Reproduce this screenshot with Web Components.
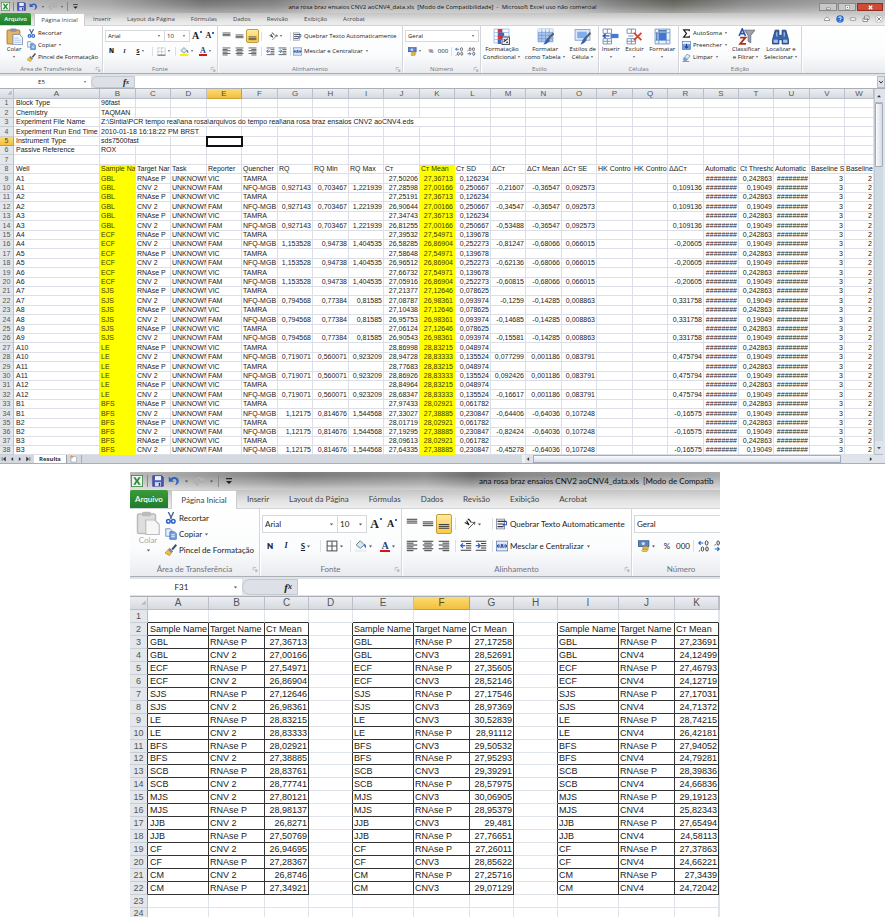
<!DOCTYPE html>
<html lang="pt-BR">
<head>
<meta charset="utf-8">
<title>ana rosa braz ensaios CNV2 aoCNV4_data.xls</title>
<style>
html,body{margin:0;background:#fff}
body{height:100vh;display:flex;flex-direction:column;gap:8px;overflow:hidden;font-family:"Liberation Sans",Arial,sans-serif;color:#222}
.second{flex:1;min-height:0;width:67%;max-width:590px;margin-left:130px}
</style>
</head>
<body>
<xl-window>
  <xl-titlebar controls>ana rosa braz ensaios CNV2 aoCNV4_data.xls &nbsp;[Modo de Compatibilidade] &nbsp;- &nbsp;Microsoft Excel uso não comercial</xl-titlebar>
  <xl-tabs controls></xl-tabs>
  <xl-ribbon full></xl-ribbon>
  <xl-formula cell="E5" expander></xl-formula>
  <xl-sheet kind="results"></xl-sheet>
  <xl-sheetbar name="Results"></xl-sheetbar>
</xl-window>
<xl-window class="second" size="large">
  <xl-titlebar>ana rosa braz ensaios CNV2 aoCNV4_data.xls &nbsp;[Modo de Compatib</xl-titlebar>
  <xl-tabs></xl-tabs>
  <xl-ribbon></xl-ribbon>
  <xl-formula cell="F31"></xl-formula>
  <xl-sheet kind="summary"></xl-sheet>
</xl-window>

<script>
const define=(name,render,after)=>customElements.define(name,class extends HTMLElement{
  connectedCallback(){
    if(this.shadowRoot)return;
    const root=this.attachShadow({mode:'open'});
    root.innerHTML=render(this);
    if(after)after(root,this);
  }
});
const lines=(list,c='#444')=>list.map(([x,y,w])=>`<rect x="${x}" y="${y}" width="${w}" height="1.4" fill="${c}"/>`).join('');
const ICONS={
  excel:'<rect x=".5" y=".5" width="15" height="15" fill="#eef6ec" stroke="#2f7d36"/><path d="M3 3h3l2 3.3L10 3h3L9.600 8l3.400 5h-3L8 9.700 6 13H3l3.400-5z" fill="#2c8a3a"/>',
  save:'<path d="M1 1h12l2 2v12H1z" fill="#4b59b8" stroke="#2d3787"/><rect x="4" y="1.500" width="8" height="5.500" fill="#eef1fb"/><rect x="4" y="9.500" width="8" height="5.500" fill="#d5daf0"/><rect x="9" y="10.500" width="2" height="4" fill="#2d3787"/>',
  undo:'<path d="M1 2v7h7L5.600 6.600C9 4 12.500 6 11 10.500c-.5 1.500-1.500 2.800-2.500 3.500C14 13 16 8 13 4.700 10.500 2 6.600 2 3.500 4.500z" fill="#2f5fc0"/>',
  redo:'<path d="M15 2v7H8l2.400-2.400C7 4 3.500 6 5 10.500c.5 1.500 1.500 2.800 2.500 3.500C2 13 0 8 3 4.700 5.500 2 9.400 2 12.500 4.500z" fill="#b4b6ba" stroke="#999" stroke-width=".5"/>',
  qat:'<path d="M4 4h8v1.500H4zM4 8h8l-4 4z" fill="#222"/>',
  caret:'<path d="M3 5h10l-5 6z" fill="#555"/>',
  cut:'<path d="M4.500 0l4.300 9M11.500 0L7.200 9" stroke="#41608f" stroke-width="1.800" fill="none"/><circle cx="4.500" cy="12.300" r="2.400" fill="none" stroke="#2a62c4" stroke-width="2"/><circle cx="11" cy="12.300" r="2.400" fill="none" stroke="#2a62c4" stroke-width="2"/>',
  copy:'<path d="M1 1h6l2 2v8H1z" fill="#e6effb" stroke="#5379b8"/><path d="M6.500 5h6l2.500 2.500V15H6.500z" fill="#7da7e6" stroke="#2f5fae"/><path d="M8.500 9h4.500M8.500 11.500h4.500" stroke="#fff"/>',
  brush:'<path d="M15 1l-5.500 6.500" stroke="#444d60" stroke-width="2.600"/><path d="M6 5l5 5-2.500 2L4 7.500z" fill="#7e8798"/><path d="M4 7.500l4.500 4.500L6 15.500 0 12z" fill="#f0c04a" stroke="#a87a1c" stroke-width=".8"/>',
  paste:'<rect x="1" y="2" width="12" height="13" rx="1" fill="#e3b565" stroke="#b38433"/><rect x="4" y=".5" width="6" height="3" rx="1" fill="#8b93a3"/><path d="M6.500 6h6l3 3v6.800h-9z" fill="#f3f7fd" stroke="#6c86b5" stroke-width=".8"/><path d="M8 9.500h4M8 11.500h6M8 13.500h6" stroke="#9db4da" stroke-width=".7"/>',
  pastegray:'<rect x="1" y="2" width="12" height="13" rx="1" fill="#dedede" stroke="#bbb"/><rect x="4" y=".5" width="6" height="3" rx="1" fill="#bbb"/><path d="M6.500 6h6l3 3v6.800h-9z" fill="#f6f6f6" stroke="#bdbdbd" stroke-width=".8"/>',
  border:'<rect x="1.500" y="1.500" width="13" height="13" fill="none" stroke="#555" stroke-width="1.400" /><path d="M8 1.500v13M1.500 8h13" stroke="#555" stroke-width="1.400"/>',
  borderlow:'<path d="M1.500 1.500h13v13M1.500 1.500v13M8 1.500v13M1.500 8h13" fill="none" stroke="#8d93a0" stroke-dasharray="1.500 1"/><path d="M1 14.500h14" stroke="#444" stroke-width="1.600"/>',
  bucket:'<path d="M7 1L1.500 6.500 7 11l5.500-4.500z" fill="#d9e6f7" stroke="#466" /><path d="M12 5c2 .5 3.500 3 2.500 6-1-.5-2-2.500-2.500-4z" fill="#3d6bc0"/><rect x="0" y="12.500" width="15" height="3.500" fill="var(--paint,#ffee00)"/>',
  top:lines([[1,1,14],[1,3.500,14],[1,6,14]]),
  mid:lines([[1,4.500,14],[1,7,14],[1,9.500,14]]),
  bot:lines([[1,8,14],[1,10.500,14],[1,13,14]]),
  left:lines([[1,1,14],[1,3.500,9],[1,6,14],[1,8.500,9],[1,11,14],[1,13.500,9]]),
  center:lines([[1,1,14],[3,3.500,10],[1,6,14],[3,8.500,10],[1,11,14],[3,13.500,10]]),
  right:lines([[1,1,14],[6,3.500,9],[1,6,14],[6,8.500,9],[1,11,14],[6,13.500,9]]),
  orient:'<path d="M6 14L14.500 5.500M14.500 5.500l-3.500.5M14.500 5.500l-.5 3.500" stroke="#555" stroke-width="1.300" fill="none"/><path d="M1 6l6 3M3.500 3.500l3 6M5 1.500c3 0 3 3 5 4.500" stroke="#222" stroke-width="1.500" fill="none"/>',
  outdent:lines([[1,1,14],[8,4,7],[8,7,7],[8,10,7],[1,13,14]])+'<path d="M7 7.500H2M4 4.500L1 7.500l3 3" stroke="#2a62c4" stroke-width="1.700" fill="none"/>',
  indent:lines([[1,1,14],[8,4,7],[8,7,7],[8,10,7],[1,13,14]])+'<path d="M1 7.500h5M4 4.500l3 3-3 3" stroke="#2a62c4" stroke-width="1.700" fill="none"/>',
  wrap:'<rect x=".5" y="1.500" width="11" height="13" fill="#f4f6fa" stroke="#778"/><path d="M2 4.500h12M2 8h8M2 11.500h8" stroke="#334" stroke-width="1.400"/><path d="M14 4.500v4.500h-4M11.500 7L9.500 9l2 2" stroke="#2a62c4" stroke-width="1.400" fill="none"/>',
  merge:'<rect x=".5" y="1.500" width="15" height="13" fill="#e9eef8" stroke="#5d78ad"/><rect x="1" y="5" width="14" height="6" fill="#a9c4ee"/><path d="M5 8H1.500M11 8h3.500M3.500 6L1.500 8l2 2M12.500 6l2 2-2 2M8 5.500L6.500 10.500M8 5.500l1.500 5" stroke="#223f7d" stroke-width="1.200" fill="none"/>',
  money:'<rect x=".5" y="1" width="14" height="7.500" fill="#5d83c9" stroke="#2e4e8e"/><circle cx="7" cy="4.700" r="2.200" fill="#cfdef5"/><ellipse cx="10" cy="10" rx="4" ry="1.600" fill="#f4ce58" stroke="#9a7415" stroke-width=".7"/><ellipse cx="10" cy="12" rx="4" ry="1.600" fill="#f4ce58" stroke="#9a7415" stroke-width=".7"/><ellipse cx="9" cy="14" rx="4" ry="1.600" fill="#f4ce58" stroke="#9a7415" stroke-width=".7"/>',
  incdec:'<path d="M7 4H1M3.500 1.500L1 4l2.500 2.500" stroke="#2a62c4" stroke-width="1.500" fill="none"/><ellipse cx="11.500" cy="4" rx="1.900" ry="2.800" fill="none" stroke="#333" stroke-width="1.200"/><ellipse cx="6" cy="12" rx="1.700" ry="2.800" fill="none" stroke="#333" stroke-width="1.200"/><ellipse cx="12" cy="12" rx="1.700" ry="2.800" fill="none" stroke="#333" stroke-width="1.200"/><path d="M2.500 13.500l-1 2" stroke="#333"/>',
  decdec:'<ellipse cx="5.500" cy="4" rx="1.700" ry="2.800" fill="none" stroke="#333" stroke-width="1.200"/><ellipse cx="11.500" cy="4" rx="1.700" ry="2.800" fill="none" stroke="#333" stroke-width="1.200"/><path d="M2 5.500l-1 2" stroke="#333"/><path d="M1 12h6M4.500 9.500L7 12l-2.500 2.500" stroke="#2a62c4" stroke-width="1.500" fill="none"/><ellipse cx="12" cy="12" rx="1.900" ry="2.800" fill="none" stroke="#333" stroke-width="1.200"/>',
  cond:'<path d="M1 1h14v13H1zM1 4.300h14M1 7.600h14M1 10.900h14M5 1v13M9 1v13" fill="#fff" stroke="#8fb0dd" stroke-width=".7"/><rect x="4.500" y="1" width="4" height="3.500" fill="#d8323a"/><rect x="4.500" y="7.500" width="5" height="3.500" fill="#d8323a"/><rect x="4.500" y="4.500" width="6" height="3" fill="#3a66c4"/><rect x="4.500" y="11" width="3" height="4" fill="#3a66c4"/><rect x="8.500" y="8.500" width="7" height="7" fill="#eef2f8" stroke="#556"/><path d="M10 13l4-3M10 11h1.500M12.500 13.500H14" stroke="#223" stroke-width="1"/>',
  table:'<path d="M1 1h14v12H1z" fill="#a9c6ef" stroke="#6f92c8" stroke-width=".7"/><rect x="1" y="1" width="14" height="3" fill="#eef3fb"/><path d="M1 4h14M1 7h14M1 10h14M4.500 1v12M8 1v12M11.500 1v12" stroke="#6f92c8" stroke-width=".6"/><path d="M15.500 5l-6 6.500" stroke="#5a5f6b" stroke-width="2"/><path d="M10.500 9.500l1.500 2c-1.500 3-4 4-6 4 1.500-1.500 1.500-4 4.500-6z" fill="#3263b5"/>',
  styles:'<rect x="1" y="1.500" width="14" height="10" fill="#dfe9f7" stroke="#7d9bce" stroke-width=".8"/><rect x="3" y="3.500" width="9" height="6" fill="#80adee"/><path d="M15.500 4.500l-6 6.500" stroke="#5a5f6b" stroke-width="2"/><path d="M10.500 9l1.500 2c-1.500 3-4 4-6 4.500 1.500-1.500 1.500-4.500 4.500-6.500z" fill="#3263b5"/>',
  insert:'<path d="M1 1h8v4H1zM1 10h8v5H1zM5 1v4M5 10v5M1 12.500h8" fill="#fff" stroke="#7890b8" stroke-width=".9"/><rect x="8" y="5.500" width="7.500" height="4" fill="#4779ce"/><path d="M7 7.500H1M3.500 5.500l-2.500 2 2.500 2" stroke="#2a55a8" stroke-width="1.200" fill="none"/>',
  del:'<path d="M1 1h8v4H1zM1 10h8v5H1zM5 1v4M5 10v5M1 12.500h8M2 7.500h5" fill="#fff" stroke="#7890b8" stroke-width=".9"/><path d="M7.500 4.500l7 7M14.500 4.500l-7 7" stroke="#d4402e" stroke-width="1.600"/>',
  format:'<path d="M1 1h14v14H1zM1 4.500h14M1 11.500h14M4.500 1v14M11.500 1v14" fill="#eaf1fb" stroke="#7f9ccb" stroke-width=".9"/><rect x="4.500" y="4.500" width="7" height="7" fill="#3f78d3"/><path d="M4.500 2.700h7M2.700 4.500v7" stroke="#24509c" stroke-width="1"/>',
  sigma:'<path d="M13 4V1.500H3L8 8l-5 6.500h10V12" fill="none" stroke="#222" stroke-width="2.200"/>',
  fill:'<rect x="1" y="1" width="14" height="14" fill="#6f9be0" stroke="#3560a8"/><rect x="1.500" y="1.500" width="13" height="4" fill="#e8effa"/><path d="M8 5v7M5 9.500l3 3 3-3" stroke="#1c3f88" stroke-width="1.800" fill="none"/>',
  erase:'<path d="M2 10.500L9 2l5.500 3L8 13.500H3.500z" fill="#dfe8f5" stroke="#5b6d90"/><path d="M2 10.500l3-3.500 5 3.500-2 3H3.500z" fill="#7aa1dc"/><path d="M1 15h12" stroke="#445" stroke-width="1"/>',
  sort:'<path d="M1 7.500L4 .8l3 6.700M2 5.300h4" stroke="#2a55a8" stroke-width="1.500" fill="none"/><path d="M2 9h5l-5 6h5.500" stroke="#a8321e" stroke-width="1.700" fill="none"/><path d="M6 2h10l-4 5v7l-2.500-1.500V7z" fill="#9aa1ad" stroke="#5d6470" stroke-width=".7"/>',
  find:'<path d="M3 2h3.500v4.500l1 .5h1l1-.5V2H13l2.500 9v4H9.500v-4h-3v4H.5v-4z" fill="#3a66ad" stroke="#1d3c74" stroke-width=".8"/><rect x="1.500" y="11" width="4" height="3" fill="#9fc0ee"/><rect x="10.500" y="11" width="4" height="3" fill="#9fc0ee"/><path d="M4.500 4v4M11.500 4v4" stroke="#a9c8f2"/>',
  launcher:'<path d="M3 12V4h8" stroke="#999" stroke-width="1.400" fill="none"/><path d="M7 8l6 6M13 9v5H8" stroke="#888" stroke-width="1.500" fill="none"/>',
  help:'<circle cx="8" cy="8" r="7.500" fill="#2f6fc9"/><path d="M5.500 6c0-3.500 5-3.500 5 0 0 2-2.500 2-2.500 4M8 11.500v2" stroke="#fff" stroke-width="1.800" fill="none"/>',
  up:'<path d="M3 11V8l5-4 5 4v3z" fill="#fff" stroke="#777" stroke-width="1.400"/>',
  wmin:'<rect x="2.500" y="5.500" width="11" height="5" rx="1" fill="#fff" stroke="#777" stroke-width="1.400"/>',
  wrest:'<path d="M5 2h9v7H5zM2 6h9v7H2z" fill="#fff" stroke="#777" stroke-width="1.500"/>',
  wclose:'<path d="M2 2h12v12H2z" fill="#fff" stroke="#999"/><path d="M4.500 4.500l7 7M11.500 4.500l-7 7" stroke="#777" stroke-width="1.800"/>',
  cmin:'<rect x="4" y="9" width="8" height="3" fill="#fff" stroke="#555"/>',
  cmax:'<rect x="3" y="3" width="10" height="10" fill="#fff" stroke="#555"/><rect x="6.500" y="6.500" width="3" height="3" fill="#777"/>',
  cclose:'<path d="M4 4l8 8M12 4l-8 8" stroke="#fff" stroke-width="3"/>',
  newtab:'<path d="M2 3h9l2 2v9H2z" fill="#fff" stroke="#7d8aa5"/><path d="M1 1l5 5M3.500 0v7M0 3.500h7" stroke="#eb9a2b" stroke-width="1.500"/>',
  first:'<path d="M3 3v10M12 3L6 8l6 5z" stroke="#333" fill="#333" stroke-width="1.500"/>',
  prev:'<path d="M11 3L5 8l6 5z" fill="#333"/>',
  next:'<path d="M5 3l6 5-6 5z" fill="#333"/>',
  last:'<path d="M13 3v10M4 3l6 5-6 5z" stroke="#333" fill="#333" stroke-width="1.500"/>',
  arrowup:'<path d="M3 11l5-6 5 6z" fill="#333"/>',
  corner:'<path d="M13 3v10H3z" fill="#b4b9c4"/>',
  chevron:'<path d="M3 5l5 6 5-6" fill="none" stroke="#222" stroke-width="2.400"/>'
};
define('xl-icon',e=>`<style>:host{display:inline-block;flex:none;width:var(--ic,9px);height:var(--ic,9px)}svg{display:block;width:100%;height:100%}</style>
<svg viewBox="0 0 16 16" aria-hidden="true">${ICONS[e.getAttribute('name')]}</svg>`);
const icon=(n,cls='')=>`<xl-icon name="${n}" class="${cls}"></xl-icon>`;
const caret=icon('caret','caret');
const RESET=`*{box-sizing:border-box}button,select,input{font:inherit;color:inherit;background:none;border:0;padding:0;margin:0;border-radius:0;appearance:none;min-width:0;white-space:nowrap}.caret{--ic:var(--caret)}`;

define('xl-window',()=>`<style>
::slotted(*){flex:none}
:host{display:flex;flex-direction:column;overflow:hidden;flex:none;--fs:6px;--ui:"Open Sans","Noto Sans",sans-serif;--title-fs:6px;--title-h:13px;--tabs-h:13px;--arq-w:31px;--tab-on:51px;--tab-pad:8px;--ic:9px;--caret:4px;--big:17px;
--body-h:38px;--label-h:9px;--row:14px;--row-top:3px;--row-gap:1px;--small-row:12px;--line:8px;--fx-h:12px;--fx-bottom:0;--name-w:91px;--gut:3px;
--g1:103px;--g2:115px;--g3:185px;--g4:78px;--paste-w:26px;--font-top:60px 25px 14px 12px;--font-bot:13px 13px 19px 4px 19px 4px 19px 19px;--al:13px 13px 13px 5px 24px 5px auto;--num:20px 12px 12px 4px 12px 12px}
:host([size=large]){--fs:8px;--ui:Lato,"Open Sans",sans-serif;--title-fs:8px;--title-h:18px;--tabs-h:19px;--arq-w:38px;--tab-on:66px;--tab-pad:10px;--ic:12px;--caret:5px;--big:24px;
--body-h:53px;--label-h:14px;--row:20px;--row-top:5px;--row-gap:2px;--small-row:16px;--line:10px;--fx-h:16px;--fx-bottom:1px;--name-w:112px;--gut:4px;
--g1:130px;--g2:142px;--g3:230px;--g4:99px;--paste-w:34px;--font-top:76px 29px 18px 14px;--font-bot:16px 16px 24px 4px 26px 4px 24px 24px;--al:16px 16px 16px 6px 30px 8px auto;--num:25px 16px 16px 5px 16px 16px}
</style><slot></slot>`);

define('xl-titlebar',e=>`<style>${RESET}
:host{display:grid;grid-template-columns:1fr auto 1fr;align-items:center;height:var(--title-h);font:var(--title-fs)/var(--line) var(--ui);color:#111;white-space:nowrap;background:linear-gradient(#0000,#fff2 45%,#fff6),linear-gradient(90deg,#b9b9b9,#a2a2a2 12%,#6f6f6f 23%,#7d7d7d 31%,#adadad 38%,#b0b0b0 62%,#777 70%,#5f6058 76%,#858585 84%,#a8a8a8)}
.q{display:flex;align-items:center;gap:var(--gut);padding-left:1px}.q button{display:flex;align-items:center}
.c{display:flex;justify-content:flex-end;gap:1px;padding-right:2px}
.c button{width:18px;height:8px;display:grid;place-items:center;background:#c8c8c8;border:1px solid #888;--ic:7px}.c .x{width:26px;background:#d04a35;border-color:#8e3024}
i{width:1px;height:var(--ic);background:#888}
:host(:not([controls])){grid-template-columns:349px auto;background:linear-gradient(#0000 20%,#fff4 60%,#fff9),linear-gradient(90deg,#bbb,#999 14%,#7c7c7c 28%,#8e8e8e 50%,#6f6f6f 58%,#8a8a8a 66%,#aaa)}
</style><div class="q">${icon('excel')}<i></i><button aria-label="Salvar">${icon('save')}</button><button aria-label="Desfazer">${icon('undo')}</button>${caret}<button aria-label="Refazer">${icon('redo')}</button>${caret}<i></i><button aria-label="Personalizar">${icon('qat')}</button></div>
<span><slot></slot></span>${e.hasAttribute('controls')?`<div class="c"><button aria-label="Minimizar">${icon('cmin')}</button><button aria-label="Restaurar">${icon('cmax')}</button><button class="x" aria-label="Fechar">${icon('cclose')}</button></div>`:''}`);

define('xl-tabs',e=>`<style>${RESET}
:host{display:flex;align-items:stretch;box-sizing:border-box;height:var(--tabs-h);font:var(--fs)/var(--line) var(--ui);color:#444;background:linear-gradient(#c3c3c3,#e3e3e3 60%,#eee);border-bottom:1px solid #d0d3d8}
button{padding:0 var(--tab-pad)}
.a{width:var(--arq-w);padding:0;color:#fff;background:linear-gradient(#3c9a3c,#1e7d2a);border-radius:2px 2px 0 0;font-weight:600}
.on{width:var(--tab-on);padding:0;margin:0 0 -1px 3px;background:#fff;border:1px solid #ccc;border-bottom:0;border-radius:2px 2px 0 0}
.r{margin-left:auto;display:flex;align-items:center;gap:5px;padding-right:2px;--ic:8px}.r button{padding:0;display:flex}
</style><button class="a">Arquivo</button><button class="on">Página Inicial</button>${['Inserir','Layout da Página','Fórmulas','Dados','Revisão','Exibição','Acrobat'].map(t=>`<button>${t}</button>`).join('')}
${e.hasAttribute('controls')?`<div class="r">${[['up','Minimizar faixa'],['help','Ajuda'],['wmin','Minimizar pasta'],['wrest','Restaurar pasta'],['wclose','Fechar pasta']].map(([n,l])=>`<button aria-label="${l}">${icon(n)}</button>`).join('')}</div>`:''}`);

define('xl-group',e=>`<style>${RESET}
:host{display:flex;flex-direction:column;flex:none;box-sizing:border-box;border-right:1px solid #d3d6db;box-shadow:1px 0 #fff}
.b{height:var(--body-h)}
.l{position:relative;display:flex;justify-content:center;align-items:center;height:var(--label-h);color:#6f747d;line-height:var(--line);white-space:nowrap}
.l button{position:absolute;right:1px;--ic:6px;display:flex}
</style><div class="b"><slot></slot></div><div class="l"><span>${e.getAttribute('label')}</span>${e.hasAttribute('launcher')?`<button aria-label="Mais opções">${icon('launcher')}</button>`:''}</div>`);

const small=(ic,t,c)=>`<button class="sm">${icon(ic)}<span>${t}</span>${c?caret:''}</button>`;
const big=(ic,a,b,c=true)=>`<button class="big">${icon(ic)}<span>${a}</span><span class="n">${b}${c?caret:''}</span></button>`;
const ib=(ic,l,c,cls='')=>`<button class="ib ${cls}" aria-label="${l}">${icon(ic)}${c?caret:''}</button>`;
const tb=(t,l,c,cls='')=>`<button class="ib ${cls}" aria-label="${l}"><span>${t}</span>${c?caret:''}</button>`;
define('xl-ribbon',e=>{
  const full=e.hasAttribute('full');
  return `<style>${RESET}
:host{display:flex;overflow:hidden;font:var(--fs)/var(--line) var(--ui);color:#222;background:linear-gradient(#fff,#fbfcfd 60%,#e9ebef);border-bottom:1px solid #a9aeb7}
.g1{width:var(--g1)}.g2{width:var(--g2)}.g3{width:var(--g3)}.g4{width:var(--g4)}
.clip{display:flex;height:100%;padding-left:1px}
.stack{display:grid;grid-auto-rows:var(--small-row);padding-top:1px}
.sm,.ib{display:flex;align-items:center;gap:1px}.sm{gap:2px}.ib{justify-content:center}
.big{display:flex;flex-direction:column;align-items:center;padding-top:2px;--ic:var(--big);text-align:center}
.n{display:flex;align-items:center;gap:1px;min-height:var(--line)}
.paste{display:grid;width:var(--paste-w)}
.rows{display:grid;grid-auto-rows:var(--row);row-gap:var(--row-gap);padding:var(--row-top) 1px 0 2px}
.rows>div{display:grid;align-items:center}
.ft{grid-template-columns:var(--font-top)}.fb{grid-template-columns:var(--font-bot)}.al{grid-template-columns:var(--al)}.nu{grid-template-columns:var(--num)}
.box{position:relative;display:flex;align-items:center;background:#fff;border:1px solid #d5d8dd;height:calc(100% - 2px)}
.box+.box{border-left:0}.box select{width:100%;padding-left:2px;font-size:var(--fs)}.box xl-icon{position:absolute;right:3px}
i.s{width:1px;height:var(--ic);background:#dcdfe4;justify-self:center}
.on{background:linear-gradient(#fde9a0,#fbc944);border:1px solid #c49b3d;border-radius:2px;height:100%}
.N{font-weight:800}.I{font-style:italic;font-family:"Liberation Serif",serif;font-weight:bold}.S span{text-decoration:underline;font-weight:bold}
.fa span{font:bold calc(var(--fs) + 4px)/1 "Liberation Serif",serif}.fb2 span{font:bold calc(var(--fs) + 2px)/1 "Liberation Serif",serif}
.fa::after,.fb2::after{content:"";align-self:flex-start;width:2px;height:2px;background:#3c64b4}
.col span{font:bold calc(var(--fs) + 2px)/calc(var(--line) - 1px) "Liberation Serif",serif;color:#1f3f86;border-bottom:2px solid #d11;padding:0 1px}
.two{display:flex;justify-content:space-around}
.ed{display:flex;height:100%;justify-content:space-around}
.e1{width:118px}.e2{width:80px}.e3{width:123px}.e3 .ed{justify-content:space-between;padding:0 3px}
.gray{color:#aaa}
:host(:not([full])) .fb{--paint:#e9eef7}
</style>
<xl-group class="g1" label="Área de Transferência" launcher><div class="clip"><div class="paste ${full?'':'gray'}">${big(full?'paste':'pastegray','Colar','')}</div><div class="stack">${small('cut','Recortar')}${small('copy','Copiar',1)}${small('brush','Pincel de Formatação')}</div></div></xl-group>
<xl-group class="g2" label="Fonte" launcher><div class="rows"><div class="ft"><label class="box"><select aria-label="Fonte"><option>Arial</option></select>${caret}</label><label class="box"><select aria-label="Tamanho"><option>10</option></select>${caret}</label>${tb('A','Aumentar fonte',0,'fa')}${tb('A','Diminuir fonte',0,'fb2')}</div>
<div class="fb">${tb('N','Negrito',0,'N')}${tb('I','Itálico',0,'I')}${tb('S','Sublinhado',1,'S')}<i class="s"></i>${ib(full?'borderlow':'border','Bordas',1)}<i class="s"></i>${ib('bucket','Cor de preenchimento',1)}${tb('A','Cor da fonte',1,'col')}</div></div></xl-group>
<xl-group class="g3" label="Alinhamento" launcher><div class="rows"><div class="al">${ib('top','Acima')}${ib('mid','Meio')}${ib('bot','Abaixo',0,'on')}<i class="s"></i>${ib('orient','Orientação',1)}<i class="s"></i>${small('wrap','Quebrar Texto Automaticamente')}</div>
<div class="al">${ib('left','Esquerda')}${ib('center','Centro')}${ib('right','Direita')}<i class="s"></i><div class="two">${ib('outdent','Diminuir recuo')}${ib('indent','Aumentar recuo')}</div><i class="s"></i>${small('merge','Mesclar e Centralizar',1)}</div></div></xl-group>
<xl-group class="g4" label="Número" launcher><div class="rows"><div><label class="box"><select aria-label="Formato"><option>Geral</option></select>${caret}</label></div>
<div class="nu">${ib('money','Moeda',1)}${tb('%','Porcentagem')}${tb('000','Milhares')}<i class="s"></i>${ib('incdec','Aumentar casas')}${ib('decdec','Diminuir casas')}</div></div></xl-group>
${full?`<xl-group class="e1" label="Estilo"><div class="ed">${big('cond','Formatação','Condicional')}${big('table','Formatar','como Tabela')}${big('styles','Estilos de','Célula')}</div></xl-group>
<xl-group class="e2" label="Células"><div class="ed">${big('insert','Inserir','')}${big('del','Excluir','')}${big('format','Formatar','')}</div></xl-group>
<xl-group class="e3" label="Edição"><div class="ed"><div class="stack">${small('sigma','AutoSoma',1)}${small('fill','Preencher',1)}${small('erase','Limpar',1)}</div>${big('sort','Classificar','e Filtrar')}${big('find','Localizar e','Selecionar')}</div></xl-group>`:''}`;
});

define('xl-formula',e=>`<style>${RESET}
:host{display:flex;align-items:stretch;padding:2px 0 var(--fx-bottom);background:#dfe2e7;font:var(--fs)/var(--line) var(--ui);color:#222}
.n{display:flex;align-items:center;width:var(--name-w);height:var(--fx-h);background:#fff;padding-right:4px}
.n input{width:100%;text-align:center;font-size:var(--fs)}
.f{display:flex;align-items:center;justify-content:flex-end;width:44px;padding-right:5px;background:#dde0e6;border-radius:8px 0 0 8px;border:1px solid #c3c8d0;font:italic bold calc(var(--fs) + 3px)/1 "Liberation Serif",serif}
.f small{font-size:var(--fs)}
:host(:not([expander])) .f{width:56px}
.v{flex:1;background:#fff;min-width:0}
.x{width:8px;display:grid;place-items:center;border:1px solid #b8bdc7;--ic:6px}
</style><div class="n"><input aria-label="Caixa de nome" value="${e.getAttribute('cell')}">${caret}</div><button class="f" aria-label="Inserir função">f<small>x</small></button><input class="v" aria-label="Barra de fórmulas">${e.hasAttribute('expander')?`<button class="x" aria-label="Expandir">${icon('chevron')}</button>`:''}`);

const HASH='########';
const WELLS=[
 ['GBL',['A1','A2','A3'],['27,50206','27,25191','27,34743'],'27,36713','0,126234',['27,28598','26,90644','26,81255'],'27,00166','0,250667','0,927143','0,703467','1,221939',['-0,21607','-0,34547','-0,53488'],'-0,36547','0,092573','0,109136'],
 ['ECF',['A4','A5','A6'],['27,39532','27,58648','27,66732'],'27,54971','0,139678',['26,58285','26,96512','27,05916'],'26,86904','0,252273','1,153528','0,94738','1,404535',['-0,81247','-0,62136','-0,60815'],'-0,68066','0,066015','-0,20605'],
 ['SJS',['A7','A8','A9'],['27,21377','27,10438','27,06124'],'27,12646','0,078625',['27,08787','26,95753','26,90543'],'26,98361','0,093974','0,794568','0,77384','0,81585',['-0,1259','-0,14685','-0,15581'],'-0,14285','0,008863','0,331758'],
 ['LE',['A10','A11','A12'],['28,86998','28,77683','28,84964'],'28,83215','0,048974',['28,94728','28,86926','28,68347'],'28,83333','0,135524','0,719071','0,560071','0,923209',['0,077299','0,092426','-0,16617'],'0,001186','0,083791','0,475794'],
 ['BFS',['B1','B2','B3'],['27,97433','28,01719','28,09613'],'28,02921','0,061782',['27,33027','27,19295','27,64335'],'27,38885','0,230847','1,12175','0,814676','1,544568',['-0,64406','-0,82424','-0,45278'],'-0,64036','0,107248','-0,16575']];
function resultRows(){
  const rows=[['Block Type','96fast'],['Chemistry','TAQMAN'],['Experiment File Name','Z:\\Sintia\\PCR tempo real\\ana rosa\\arquivos do tempo real\\ana rosa braz ensaios CNV2 aoCNV4.eds'],['Experiment Run End Time','2010-01-18 16:18:22 PM BRST'],['Instrument Type','sds7500fast'],['Passive Reference','ROX'],[],
  ['Well','Sample Na','Target Nar','Task','Reporter','Quencher','RQ','RQ Min','RQ Max','Cт','Cт Mean','Cт SD','ΔCт','ΔCт Mean','ΔCт SE','HK Contro','HK Contro','ΔΔCт','Automatic','Ct Thresho','Automatic','Baseline S','Baseline']];
  for(const [s,w,r,rm,rs,c,cm,cs,q,lo,hi,d,dm,de,dd] of WELLS)w.forEach((x,i)=>{
    rows.push([x,s,'RNAse P','UNKNOWN','VIC','TAMRA','','','',r[i],rm,rs,'','','','','','',HASH,'0,242863',HASH,'3','2']);
    rows.push([x,s,'CNV 2','UNKNOWN','FAM','NFQ-MGB',q,lo,hi,c[i],cm,cs,d[i],dm,de,'','',dd,HASH,'0,19049',HASH,'3','2']);
  });
  return rows;
}
const NAMES='GBL GBL ECF ECF SJS SJS LE LE BFS BFS SCB SCB MJS MJS JJB JJB CF CF CM CM'.split(' ');
const P='RNAse P';
const BLOCKS=[
 [[..."PCPCPCPCPCPCCPCPCPCP"],'CNV 2','27,36713 27,00166 27,54971 26,86904 27,12646 26,98361 28,83215 28,83333 28,02921 27,38885 28,83761 28,77741 27,80121 28,98137 26,8271 27,50769 26,94695 27,28367 26,8746 27,34921'.split(' ')],
 [[..."PCPCPCCPCPCPCPCPPCPC"],'CNV3','27,17258 28,52691 27,35605 28,52146 27,17546 28,97369 30,52839 28,91112 29,50532 27,95293 29,39291 28,57975 30,06905 28,95379 29,481 27,76651 27,26011 28,85622 27,25716 29,07129'.split(' ')],
 [[..."PCPCPCPCPCPCPCPCPCPC"],'CNV4','27,23691 24,12499 27,46793 24,12719 27,17031 24,71372 28,74215 26,42181 27,94052 24,79281 28,39836 24,66836 29,19123 25,82343 27,65494 24,58113 27,37863 24,66221 27,3439 24,72042'.split(' ')]];
function summaryRows(){
  const rows=[[],[]];
  BLOCKS.forEach((b,k)=>rows[1].push('Sample Name','Target Name','Cт Mean',...(k<2?['']:[])));
  NAMES.forEach((n,i)=>{const r=[];BLOCKS.forEach((b,k)=>r.push(n,b[0][i]==='P'?P:b[1],b[2][i],...(k<2?['']:[])));rows.push(r)});
  rows.push([],[]);
  return rows;
}
define('xl-sheet',e=>{
  const sum=e.getAttribute('kind')==='summary';
  const cols=sum?[61,56,44,44,61,56,44,44,61,56,44]:[86,36,35,36,35,36,35,36,35,36,35,36,35,36,35,36,35,36,35,35,36,35];
  const n=sum?11:23, sel=sum?5:4, data=sum?summaryRows():resultRows();
  const letters=[...'ABCDEFGHIJKLMNOPQRSTUVW'].slice(0,n);
  const body=data.map((r,i)=>{
    let tds='';
    for(let c=0;c<n;c++){
      const t=r[c]||'',k=[];
      let span=1;
      if(/^-?[\d,]+$/.test(t)||t===HASH)k.push('num');
      if(!sum){
        if(i>6&&(c===1||c===10))k.push('y');
        if(i===4&&c===4)k.push('sel');
        if(i<6&&c===1)span=i===2?10:i===3?3:i===4?2:1;
      }else{
        const inB=c%4!==3;
        if(i>0&&i<22)k.push(inB?'box':'pre');
        if(i===0&&inB)k.push('under');
      }
      tds+=`<td${span>1?` colspan="${span}"`:''}${k.length?` class="${k.join(' ')}"`:''}>${t}</td>`;
      c+=span-1;
    }
    return `<tr><th scope="row"${!sum&&i===4?' class="on"':sum&&i>0&&i<22?' class="edge"':''}>${i+1}</th>${tds}${sum?'<td></td>':''}</tr>`;
  }).join('');
  return `<style>
:host{--cell:7px;--grid:#dcdfe8;display:flex;overflow:hidden;color:#222;border-top:1px solid #a9aeb7}
:host([kind=summary]){--cell:9px;--grid:#dfe3ea}
table{flex:1;min-width:0;width:100%;table-layout:fixed;border-collapse:separate;border-spacing:0;font-size:var(--cell);align-self:flex-start}
th,td{padding:0 0 0 1px;box-sizing:border-box;height:9px;line-height:8px;border-right:1px solid var(--grid);border-bottom:1px solid var(--grid);white-space:nowrap;overflow:hidden;text-align:left;font-weight:normal}
td:nth-child(2){padding-left:2px}
td.num{text-align:right;padding:0 1px 0 0}
tbody tr:nth-child(5n+2)>*,tbody tr:nth-child(5n+4)>*{height:10px}
tbody tr:nth-child(37)>*{height:9px}
:host([kind=summary]) tbody tr>*{height:13px;line-height:12px}
:host([kind=summary]) tbody tr:nth-child(12n)>*{height:12px;line-height:11px}
th{background:#e3e6eb;color:#555;text-align:center;padding:0;border-color:#b9bec8}
tbody th{border-bottom-color:#c9cdd5}
thead th{height:10px;line-height:9px;font-size:8px;background:linear-gradient(#eceef1,#d6dae0)}
thead th:first-child{--ic:7px;text-align:right}
:host([kind=summary]) thead th{height:13px;line-height:12px;font-size:10px}
th.on,thead th.on{background:linear-gradient(#fbdc73,#f3bf3e);color:#5b4a12;border-color:#c89e3b}
.y{background:#ff0;border-color:#ff0;color:#3a3a00}
.sel{position:relative;outline:2px solid #111;outline-offset:-1px}
.box{border-color:#333;color:#222}.pre{border-right-color:#333}.under{border-bottom-color:#333}.edge{border-right-color:#333}
.sb{width:11px;flex:none;box-sizing:border-box;display:flex;flex-direction:column;align-items:stretch;background:#dfe3ea;border-left:1px solid #c3c8d0;padding-right:2px;--ic:6px}
.sb span{display:grid;place-items:center;height:13px;border-bottom:1px solid #b5bac5}
.sb b{height:62px;background:linear-gradient(90deg,#fafbfd,#d5dbe5);border:1px solid #a4acb9;border-radius:1px}
.sb em{flex:1;background:#cfdbe2}
</style><table><colgroup><col style="width:${sum?18:14}px">${cols.map(w=>`<col style="width:${w}px">`).join('')}<col></colgroup>
<thead><tr><th aria-label="Selecionar tudo">${icon('corner')}</th>${letters.map((l,i)=>`<th scope="col"${i===sel?' class="on"':''}>${l}</th>`).join('')}${sum?'<th></th>':''}</tr></thead><tbody>${body}</tbody></table>
${sum?'':`<div class="sb" aria-hidden="true"><span>${icon('arrowup')}</span><b></b><em></em><span>${icon('caret')}</span></div>`}`;
});

define('xl-sheetbar',e=>`<style>${RESET}
:host{display:flex;align-items:stretch;box-sizing:border-box;height:9px;background:#d4d9e0;border-bottom:1px solid #a9aeb7;font:bold 6px/8px var(--ui);color:#333;--ic:6px}
button{display:flex;align-items:center;padding:0 1px}
.t{background:#fff;padding:0 5px;margin-left:2px;border-right:1px solid #99a;font-weight:700}
.new{--ic:8px;padding:0 3px;border-right:1px solid #aab}
.sp{flex:1}.h{flex:0 0 41%;display:flex;align-items:center;background:#dfe3ea;border-left:3px solid #eef0f4;padding-right:11px}
.h b{flex:1;height:8px;background:linear-gradient(#fafbfd,#d8dde6);border:1px solid #a4acb9;margin:0 27px 0 2px}
</style>${['first','prev','next','last'].map(n=>`<button aria-label="${n}">${icon(n)}</button>`).join('')}<button class="t">${e.getAttribute('name')}</button><button class="new" aria-label="Nova planilha">${icon('newtab')}</button><div class="sp"></div><div class="h">${icon('prev')}<b></b>${icon('next')}</div>`);
</script>
</body>
</html>
